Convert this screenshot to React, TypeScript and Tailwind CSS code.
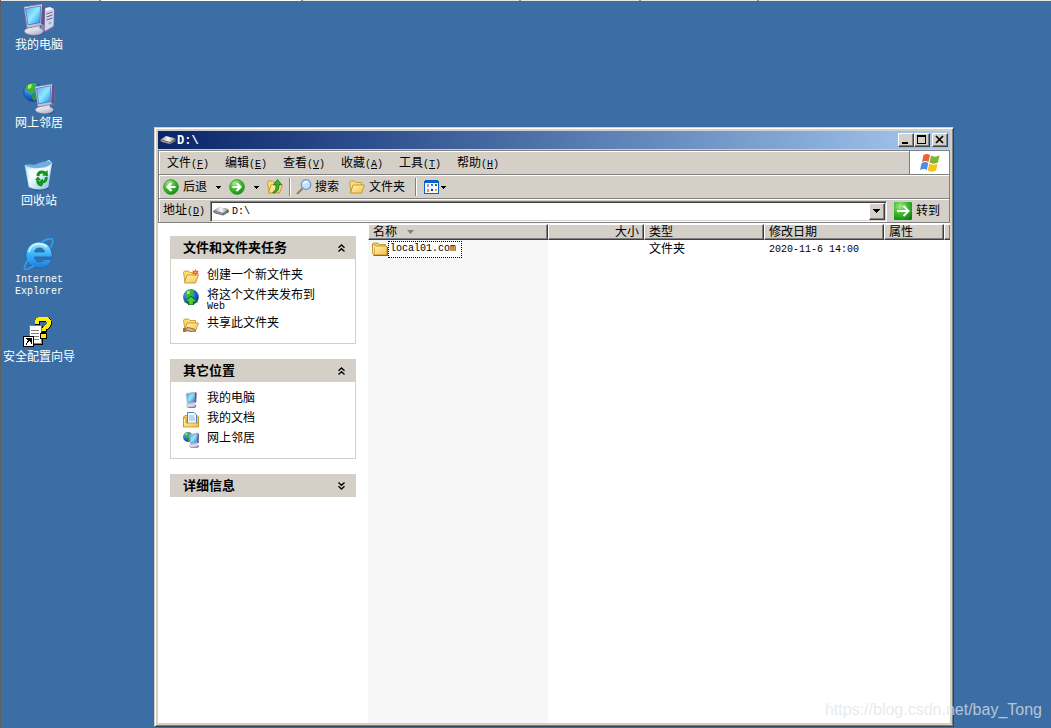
import { useState } from 'react';
import type { ReactNode } from 'react';
import clsx from 'clsx';

const RAISED =
  'border border-t-white border-l-white border-r-[#404040] border-b-[#404040] bg-[#d4d0c8] shadow-[inset_-1px_-1px_0_#808080]';

/* ---------- shared drawing bits ---------- */

function Gradients() {
  return (
    <svg className="absolute h-0 w-0" aria-hidden="true">
      <defs>
        <linearGradient id="screen" x1="0" y1="0" x2="1" y2="1">
          <stop offset="0" stopColor="#5f9cf0" />
          <stop offset="0.5" stopColor="#8cecff" />
          <stop offset="1" stopColor="#1f86f0" />
        </linearGradient>
        <linearGradient id="plastic" x1="0" y1="0" x2="1" y2="1">
          <stop offset="0" stopColor="#fbfaff" />
          <stop offset="1" stopColor="#a9a6c4" />
        </linearGradient>
        <radialGradient id="globe" cx="0.35" cy="0.3" r="0.8">
          <stop offset="0" stopColor="#7cc4ff" />
          <stop offset="0.5" stopColor="#1f6cdc" />
          <stop offset="1" stopColor="#082e80" />
        </radialGradient>
        <radialGradient id="green" cx="0.35" cy="0.25" r="0.85">
          <stop offset="0" stopColor="#a6e88a" />
          <stop offset="0.5" stopColor="#3fb92f" />
          <stop offset="1" stopColor="#0f8213" />
        </radialGradient>
        <linearGradient id="folder" x1="0" y1="0" x2="1" y2="1">
          <stop offset="0" stopColor="#fff8c4" />
          <stop offset="1" stopColor="#f5c040" />
        </linearGradient>
        <linearGradient id="bin" x1="0" y1="0" x2="1" y2="1">
          <stop offset="0" stopColor="#a8dcf8" />
          <stop offset="0.45" stopColor="#f2fbff" />
          <stop offset="1" stopColor="#7db9e6" />
        </linearGradient>
        <linearGradient id="ie" x1="0" y1="0" x2="0" y2="1">
          <stop offset="0" stopColor="#a4ecff" />
          <stop offset="0.5" stopColor="#36b0f8" />
          <stop offset="1" stopColor="#1c7ee0" />
        </linearGradient>
        <linearGradient id="drive" x1="0" y1="0" x2="1" y2="0">
          <stop offset="0" stopColor="#8c8c90" />
          <stop offset="0.5" stopColor="#f8f8fa" />
          <stop offset="1" stopColor="#8e8e94" />
        </linearGradient>
      </defs>
    </svg>
  );
}

function Monitor() {
  return (
    <g>
      <ellipse cx="12" cy="28" rx="9.5" ry="4" fill="#4a4580" />
      <ellipse cx="11" cy="27.2" rx="9.5" ry="4" fill="url(#plastic)" stroke="#8783a8" strokeWidth="0.6" />
      <path d="M9 21 L17 20 L16 27 L9 27 Z" fill="#dddcea" />
      <path d="M1 3 L19 0 L22 2 L21 21 L4 24 Z" fill="url(#plastic)" stroke="#77739c" strokeWidth="0.7" />
      <path d="M19 0 L22 2 L21 21 L18 20 Z" fill="#5a568c" />
      <path d="M2.5 4.5 L17.5 2 L17 18.5 L5 21 Z" fill="url(#screen)" stroke="#2f50a8" strokeWidth="0.6" />
    </g>
  );
}

function Globe() {
  return (
    <g>
      <circle cx="10" cy="10" r="9.5" fill="url(#globe)" stroke="#174a8f" strokeWidth="0.6" />
      <path d="M2 6 C5 1 10 0 14 1.5 L12 5 L14 8 L10 10 L9 13 L5 10 Z" fill="#3bb33a" />
      <path d="M10 12 L15 12 L15 16 L11 19 L9 16 Z" fill="#2c9c30" />
      <path d="M5 3 L9 2 L8 6 L5 7 Z" fill="#b9e86a" />
    </g>
  );
}

interface IconProps {
  className?: string;
}

function ComputerIcon({ className = 'h-8 w-8' }: IconProps) {
  return (
    <svg className={className} viewBox="0 0 32 32" aria-hidden="true">
      <path d="M19 5 L27 3 L32 6 L31 24 L23 28 L19 25 Z" fill="#6e6aa0" />
      <path d="M18 5 L27 3 L31 5 L22 8 Z" fill="#f2f1fa" />
      <path d="M18 5 L22 8 L22 27 L18 24 Z" fill="#8b87b4" />
      <path d="M22 8 L31 5 L30.5 22 L22 27 Z" fill="#d8d6e8" />
      <path d="M23.5 10 L29.5 8 M23.5 13 L29.5 11 M23.5 16 L29.5 14" stroke="#5d598c" strokeWidth="1" />
      <circle cx="27" cy="19" r="1.5" fill="#52c8e8" />
      <Monitor />
    </svg>
  );
}

function SmallComputerIcon({ className = 'h-4 w-4' }: IconProps) {
  return (
    <svg className={className} viewBox="-5 0 32 32" aria-hidden="true">
      <Monitor />
    </svg>
  );
}

function NetworkIcon({ className = 'h-8 w-8' }: IconProps) {
  return (
    <svg className={className} viewBox="0 0 32 32" aria-hidden="true">
      <Globe />
      <g transform="translate(11 2) scale(0.95)">
        <Monitor />
      </g>
    </svg>
  );
}

function RecycleIcon() {
  return (
    <svg className="h-8 w-8" viewBox="0 0 32 32" aria-hidden="true">
      <path d="M6 28 L14 31 L25 29 L30 4 L27 5 Z" fill="#1d4474" opacity="0.7" />
      <path d="M2 5 L9 7 L18 5 L26 0 L29 3 L25 27 C20 30 12 30 6 27 Z" fill="url(#bin)" stroke="#b8dcf4" strokeWidth="0.6" />
      <path d="M2 5 C7 3 10 6 14 4 C19 1 22 2 26 1 L29 3 C24 9 9 10 2 5 Z" fill="#6faee0" />
      <path d="M4 8 C10 11 22 10 27 6 L26 14 L7 18 Z" fill="#ffffff" opacity="0.6" />
      <g fill="none" stroke="#12941a" strokeWidth="3">
        <path d="M15 16 C15 12 19 11 22 13" />
        <path d="M23 17 C24 20 22 22 19 22" />
        <path d="M15 20 C14 23 16 25 19 25" />
      </g>
      <path d="M19 15.5 L25 16 L24.5 10 Z" fill="#12941a" />
      <path d="M20 18.5 L15.5 22 L20 25.5 Z" fill="#12941a" />
      <path d="M12 20 L18 20 L15 16.5 Z" fill="#12941a" />
    </svg>
  );
}

function ExplorerIcon() {
  return (
    <svg className="h-8 w-8" viewBox="0 0 32 32" aria-hidden="true">
      <path
        d="M29 19 H11.5 C12 22.5 14 24 17 24 C19 24 20.5 23 21.5 21.5 H28.5 C27 27 22.500 30 16.500 30 C8.500 30 3 24.500 3 17 C3 9.500 8.500 4 16 4 C24 4 29.500 9.500 29 19 Z M11.500 14 H21.500 C21 11.500 19.500 10 16.500 10 C13.500 10 12 11.500 11.500 14 Z"
        fill="url(#ie)"
        fillRule="evenodd"
        stroke="#1263b0"
        strokeWidth="0.7"
      />
      <path
        d="M5 22 C1 28 0 33 4 31.500 C6.500 30.500 9 29 11 27.500 M18 4.500 C24 0.500 30 -1 29.800 3 C29.700 5.500 28.500 8 27.500 9.500"
        fill="none"
        stroke="#2f9fe6"
        strokeWidth="1.800"
      />
      <path d="M6 14 C7 9 11 6 16 6 C20 6 22 7 24 9" fill="none" stroke="#d4f6ff" strokeWidth="1.600" />
    </svg>
  );
}

function WizardIcon() {
  return (
    <svg className="h-8 w-8" viewBox="0 0 32 32" shapeRendering="crispEdges" aria-hidden="true">
      <path d="M7 10 H20 V29 H7 Z" fill="#000" />
      <path d="M6 9 H18 V27 H6 Z" fill="#fff" stroke="#808080" />
      <path d="M8 14 H16 M8 17 H16 M8 20 H16 M8 23 H16" stroke="#808080" />
      <path d="M14 8 V6 C14 3 17 2.500 20 2.500 C24 2.500 26 4 26 7 C26 11 20.500 11 20.500 16" fill="none" stroke="#000" strokeWidth="5" transform="translate(0.500 0.500)" />
      <path d="M14 8 V6 C14 3 17 2.500 20 2.500 C24 2.500 26 4 26 7 C26 11 20.500 11 20.500 15" fill="none" stroke="#ffee00" strokeWidth="4" />
      <path d="M17 17 H24 V23 H17 Z" fill="#000" />
      <path d="M18 18 H23 V22 H18 Z" fill="#ffee00" />
      <path d="M0 20 H11 V31 H0 Z" fill="#000" />
      <path d="M1 21 H10 V30 H1 Z" fill="#fff" />
      <path d="M3 22 H9 V28 H8 V26 H7 V25 H6 V26 H5 V27 H4 V29 H3 V27 H4 V25 H5 V24 H4 V23 H3 Z" fill="#000" />
    </svg>
  );
}

function DriveIcon() {
  return (
    <svg className="h-4 w-4 shrink-0" viewBox="0 0 16 16" aria-hidden="true">
      <path d="M0 8 L6 4.5 L15 6 L16 9 L10 12.5 L1 10 Z" fill="#4c4c52" />
      <path d="M0.5 7.5 L6 4 L15.5 6.5 L10 10 Z" fill="url(#drive)" />
      <path d="M0.5 8 L10 10.5 L10 12 L1 9.5 Z" fill="#9a9aa0" />
      <path d="M10 10.300 L15.500 7 L15.500 9 L10 12 Z" fill="#707076" />
      <circle cx="12" cy="10" r="0.800" fill="#5ab84a" />
    </svg>
  );
}

function ArrowDisc({ back }: { back?: boolean }) {
  return (
    <svg className="h-4 w-4 shrink-0" viewBox="0 0 16 16" aria-hidden="true">
      <circle cx="8" cy="8" r="7.4" fill="url(#green)" stroke="#2c9a2a" strokeWidth="0.8" />
      <path
        d={back ? 'M12.5 8 H4.5 M8.5 4 L4.5 8 L8.5 12' : 'M3.5 8 H11.5 M7.5 4 L11.5 8 L7.5 12'}
        fill="none"
        stroke="#fff"
        strokeWidth="2.2"
      />
    </svg>
  );
}

function OpenFolder({ children }: { children?: ReactNode }) {
  return (
    <svg className="h-4 w-4 shrink-0" viewBox="0 0 16 16" aria-hidden="true">
      <path d="M0.5 3.5 L1.5 2 H5.5 L7 3.5 H12.5 V7 H4 L2 13 Z" fill="#f9dc74" stroke="#c48f1c" strokeWidth="0.8" />
      <path d="M4 6 H15.500 L12.500 14 H1.500 Z" fill="url(#folder)" stroke="#c08a1a" strokeWidth="0.8" />
      {children}
    </svg>
  );
}

function NewFolderIcon() {
  return (
    <OpenFolder>
      <path d="M12.5 0 L13.5 2 L16 1.5 L14.5 3.5 L16 5.5 L13.5 5 L12.5 7 L11.5 5 L9 5.5 L10.5 3.5 L9 1.5 L11.5 2 Z" fill="#f0582a" />
      <circle cx="12.5" cy="3.5" r="1" fill="#ffb04c" />
    </OpenFolder>
  );
}

function ShareFolderIcon() {
  return (
    <OpenFolder>
      <path d="M1 12 L5 10.5 L11 12 L13 14 L7 14.5 Z" fill="#e8b088" stroke="#6e4a34" strokeWidth="0.7" />
      <path d="M0 11 H3 V15 H0 Z" fill="#a07830" />
    </OpenFolder>
  );
}

function UpFolderIcon() {
  return (
    <OpenFolder>
      <path d="M6 13 C8.500 12 9 10 9 5.5 H6.5 L10.5 0.5 L14.5 5.5 H12 C12 10.500 10.500 13.500 6 14 Z" fill="#36b32e" stroke="#14741a" strokeWidth="0.8" />
    </OpenFolder>
  );
}

function PublishIcon() {
  return (
    <svg className="h-4 w-4" viewBox="0 0 20 20" aria-hidden="true">
      <Globe />
      <path d="M10 9 L18 16 H13 V20 H7 V16 H2 Z" fill="#45d03c" stroke="#0d5f14" strokeWidth="1.2" />
    </svg>
  );
}

function DocumentsIcon() {
  return (
    <svg className="h-4 w-4" viewBox="0 0 16 16" aria-hidden="true">
      <path d="M0.5 5 L2 3.5 H14 L15.5 5 V14 H0.5 Z" fill="#f3c950" stroke="#b98618" strokeWidth="0.8" />
      <path d="M4.5 0.5 H11 L13.5 3 V12 H4.5 Z" fill="#f2f8ff" stroke="#3a7ac8" strokeWidth="0.9" />
      <path d="M6 4 H11 M6 6 H12 M6 8 H12" stroke="#6ea4dc" strokeWidth="0.8" />
      <path d="M0.5 6 H3 V11 H15.5 V15 H0.5 Z" fill="url(#folder)" stroke="#b98618" strokeWidth="0.7" />
    </svg>
  );
}

function ClosedFolderIcon() {
  return (
    <svg className="h-4 w-4 shrink-0" viewBox="0 0 16 16" aria-hidden="true">
      <path d="M1.500 14.500 H15.500 V6" fill="none" stroke="#6b5a2a" strokeWidth="1" />
      <path d="M0.500 3 L1.500 2 H6 L7.500 3.500 H13.500 V7 H0.500 Z" fill="#f5d25c" stroke="#b8871c" strokeWidth="0.8" />
      <path d="M0.500 4 V12.500 L2 14 H15 V6 L14 5 H4 L2.500 4 Z" fill="url(#folder)" stroke="#b8871c" strokeWidth="0.8" />
      <path d="M2.500 13.500 V6" stroke="#d89c24" strokeWidth="0.8" />
    </svg>
  );
}

function SearchIcon() {
  return (
    <svg className="h-4 w-4 shrink-0" viewBox="0 0 16 16" aria-hidden="true">
      <path d="M1 15 L6.5 9.5" stroke="#b07848" strokeWidth="2.2" />
      <circle cx="10" cy="5.5" r="4.8" fill="#bfe4fb" stroke="#6f93d0" strokeWidth="1.2" />
      <path d="M7.5 5 C8 3 10 2.5 11.5 3" fill="none" stroke="#fff" strokeWidth="1.4" />
    </svg>
  );
}

function ViewsIcon() {
  return (
    <svg className="h-4 w-4" viewBox="0 0 16 16" shapeRendering="crispEdges" aria-hidden="true">
      <path d="M1 1 H14 V2 H15 V15 H0 V2 H1 Z" fill="#0a5fd0" />
      <path d="M1 4 H14 V14 H1 Z" fill="#f4f8ff" />
      <path d="M3 5 H5 V8 H3 Z" fill="#9c9cd0" />
      <path d="M7 5 H9 V7 H7 Z" fill="#2a78e8" />
      <path d="M11 5 H13 V7 H11 Z" fill="#189018" />
      <path d="M3 10 H5 V13 H3 Z" fill="#f08060" />
      <path d="M7 10 H9 V12 H7 Z" fill="#102c90" />
      <path d="M11 10 H13 V12 H11 Z" fill="#e0a010" />
    </svg>
  );
}

function WindowsFlag() {
  return (
    <svg className="h-5 w-5" viewBox="0 0 20 20" aria-hidden="true">
      <path d="M3.5 2 C6 0.5 8 0.8 10 2 L8.5 9 C6.5 7.8 4.5 7.8 2 9 Z" fill="#ee6130" />
      <path d="M11 2.5 C13.5 4 16 4 19.5 2.5 L18 9.5 C15 11 12.5 11 9.5 9.5 Z" fill="#7cb53a" />
      <path d="M1.7 10 C4.5 8.7 6.5 8.9 8.3 10 L6.8 17 C5 15.8 3 15.5 0 17 Z" fill="#4c8fe0" />
      <path d="M9.2 10.7 C12 12 14.5 12.2 17.7 10.7 L16 17.5 C13 19 10.5 19 7.7 17.5 Z" fill="#f7c11c" />
    </svg>
  );
}

function Triangle() {
  return (
    <svg className="h-[3px] w-[5px] shrink-0" viewBox="0 0 5 3" shapeRendering="crispEdges" aria-hidden="true">
      <path d="M0 0 H5 V1 H4 V2 H3 V3 H2 V2 H1 V1 H0 Z" />
    </svg>
  );
}

function Chevrons({ down }: { down?: boolean }) {
  return (
    <svg className={clsx('h-2 w-[7px]', down && 'rotate-180')} viewBox="0 0 7 8" aria-hidden="true">
      <path d="M0.5 3.7 L3.5 0.9 L6.5 3.7 M0.5 7.5 L3.5 4.7 L6.5 7.5" fill="none" stroke="#000" strokeWidth="1.3" />
    </svg>
  );
}

// half-width characters take 6px, half of a 12px ideograph
function Latin({ children, className }: { children: ReactNode; className?: string }) {
  return <span className={clsx("font-['Liberation_Mono',monospace] text-[10px]", className)}>{children}</span>;
}

/* ---------- desktop ---------- */

const shortcuts = [
  { label: '我的电脑', icon: <ComputerIcon /> },
  { label: '网上邻居', icon: <NetworkIcon /> },
  { label: '回收站', icon: <RecycleIcon /> },
  { label: 'Internet Explorer', icon: <ExplorerIcon />, latin: true },
  { label: '安全配置向导', icon: <WizardIcon /> },
];

function Shortcuts() {
  return (
    <ul className="w-[76px] pt-[3px]">
      {shortcuts.map(({ label, icon, latin }) => (
        <li key={label} className="h-[78px]">
          <button type="button" className="flex w-full flex-col items-center gap-[3px] text-center leading-3 text-white">
            {icon}
            {latin ? <Latin className="w-16 pt-px">{label}</Latin> : <span className="whitespace-nowrap">{label}</span>}
          </button>
        </li>
      ))}
    </ul>
  );
}

/* ---------- window chrome ---------- */

function TitleBar() {
  return (
    <header className="flex h-[18px] items-center bg-linear-to-r from-[#0a246a] to-[#a6caf0] px-[2px]">
      <DriveIcon />
      <h1 className="ml-px flex-1 leading-4 text-white">
        <span className="font-['Liberation_Mono',monospace] font-bold">D:\</span>
      </h1>
      <button type="button" aria-label="最小化" className={clsx(RAISED, 'h-[14px] w-4')}>
        <svg viewBox="0 0 14 12" className="h-3 w-[14px]" shapeRendering="crispEdges">
          <path d="M3 8 H9 V10 H3 Z" />
        </svg>
      </button>
      <button type="button" aria-label="最大化" className={clsx(RAISED, 'h-[14px] w-4')}>
        <svg viewBox="0 0 14 12" className="h-3 w-[14px]" shapeRendering="crispEdges">
          <path d="M2 1 H11 V10 H2 Z M3 3 V9 H10 V3 Z" fillRule="evenodd" />
        </svg>
      </button>
      <button type="button" aria-label="关闭" className={clsx(RAISED, 'ml-[2px] h-[14px] w-4')}>
        <svg viewBox="0 0 14 12" className="h-3 w-[14px]">
          <path d="M3 2 L10 9 M10 2 L3 9" stroke="#000" strokeWidth="1.7" />
        </svg>
      </button>
    </header>
  );
}

const menus = [
  ['文件', 'F'],
  ['编辑', 'E'],
  ['查看', 'V'],
  ['收藏', 'A'],
  ['工具', 'T'],
  ['帮助', 'H'],
];

function MenuBar() {
  return (
    <div className="flex h-6 border-b border-[#808080]">
      <nav className="flex flex-1 items-center pt-[2px] pl-2">
        {menus.map(([label, key]) => (
          <button key={key} type="button" className="w-[58px] text-left leading-4">
            {label}
            <Latin>
              (<u>{key}</u>)
            </Latin>
          </button>
        ))}
      </nav>
      <div className="flex w-10 items-center justify-center border-l border-[#808080] bg-white">
        <WindowsFlag />
      </div>
    </div>
  );
}

function Separator() {
  return <span className="h-[18px] w-[2px] border-l border-[#808080] bg-white" />;
}

function ToolBar() {
  return (
    <div className="flex h-6 items-center border-t border-b border-t-white border-b-[#808080] pl-1 leading-4">
      <button type="button" className="flex items-center gap-1">
        <ArrowDisc back />
        后退
      </button>
      <button type="button" aria-label="后退历史" className="flex h-4 w-[22px] items-center justify-center">
        <Triangle />
      </button>
      <button type="button" aria-label="前进">
        <ArrowDisc />
      </button>
      <button type="button" aria-label="前进历史" className="flex h-4 w-[22px] items-center justify-center">
        <Triangle />
      </button>
      <button type="button" aria-label="向上" className="mr-[6px]">
        <UpFolderIcon />
      </button>
      <Separator />
      <button type="button" className="ml-[5px] flex items-center gap-[3px]">
        <SearchIcon />
        搜索
      </button>
      <button type="button" className="mr-[10px] ml-[10px] flex items-center gap-1">
        <OpenFolder />
        文件夹
      </button>
      <Separator />
      <button type="button" aria-label="查看" className="ml-[7px] flex items-center gap-px">
        <ViewsIcon />
        <Triangle />
      </button>
    </div>
  );
}

function AddressBar() {
  const [path, setPath] = useState('D:\\');

  return (
    <form
      className="flex h-6 items-center border-t border-b border-t-white border-b-[#808080] pl-1 leading-4"
      onSubmit={(e) => e.preventDefault()}
    >
      <label htmlFor="address" className="w-[47px] whitespace-nowrap">
        地址
        <Latin>
          (<u>D</u>)
        </Latin>
      </label>
      <div className="flex h-[21px] min-w-0 flex-1 items-center border border-t-[#808080] border-r-white border-b-white border-l-[#808080] bg-white pl-[2px] shadow-[inset_1px_1px_0_#404040,inset_-1px_-1px_0_#d4d0c8]">
        <DriveIcon />
        <input
          id="address"
          className="ml-[3px] min-w-0 flex-1 bg-transparent pt-[2px] font-['Liberation_Mono',monospace] text-[10px] leading-4 outline-none"
          value={path}
          onChange={(e) => setPath(e.target.value)}
        />
        <button type="button" aria-label="显示地址列表" className={clsx(RAISED, 'mr-px flex h-[17px] w-4 items-center justify-center')}>
          <svg className="h-1 w-[7px]" viewBox="0 0 7 4" shapeRendering="crispEdges">
            <path d="M0 0 H7 V1 H6 V2 H5 V3 H4 V4 H3 V3 H2 V2 H1 V1 H0 Z" />
          </svg>
        </button>
      </div>
      <button type="submit" className="mr-[9px] ml-[7px] flex items-center gap-1">
        <svg className="h-[18px] w-[18px]" viewBox="0 0 18 18" aria-hidden="true">
          <rect x="0" y="0" width="18" height="18" rx="1" fill="url(#green)" />
          <path d="M3 9 H14 M9.5 4 L14.5 9 L9.5 14" fill="none" stroke="#fff" strokeWidth="2" />
        </svg>
        转到
      </button>
    </form>
  );
}

/* ---------- task pane ---------- */

interface Task {
  label: string;
  suffix?: string;
  icon: ReactNode;
}

const folderTasks: Task[] = [
  { label: '创建一个新文件夹', icon: <NewFolderIcon /> },
  { label: '将这个文件夹发布到', suffix: 'Web', icon: <PublishIcon /> },
  { label: '共享此文件夹', icon: <ShareFolderIcon /> },
];

const otherPlaces: Task[] = [
  { label: '我的电脑', icon: <SmallComputerIcon /> },
  { label: '我的文档', icon: <DocumentsIcon /> },
  { label: '网上邻居', icon: <NetworkIcon className="h-4 w-4" /> },
];

function TaskGroup({ title, tasks }: { title: string; tasks?: Task[] }) {
  return (
    <section>
      <h2>
        <button
          type="button"
          aria-expanded={Boolean(tasks)}
          className="flex h-[23px] w-full items-center justify-between bg-[#d4d0c8] pr-[11px] pl-[13px] text-[13px] leading-4 font-bold"
        >
          {title}
          <Chevrons down={!tasks} />
        </button>
      </h2>
      {tasks && (
        <ul className="border border-t-0 border-[#d4d0c8] px-3 pt-[10px] pb-[6px]">
          {tasks.map(({ label, suffix, icon }) => (
            <li key={label} className={suffix ? 'h-7' : 'h-5'}>
              <a href="#" className="flex gap-2 leading-3">
                <span>{icon}</span>
                <span>
                  {label}
                  {suffix && <Latin className="block">{suffix}</Latin>}
                </span>
              </a>
            </li>
          ))}
        </ul>
      )}
    </section>
  );
}

/* ---------- file list ---------- */

const columns = [
  { label: '名称', width: 'w-[180px]', sorted: true },
  { label: '大小', width: 'w-24', right: true },
  { label: '类型', width: 'w-[120px]' },
  { label: '修改日期', width: 'w-[120px]' },
  { label: '属性', width: 'w-[60px]' },
];

const files = [{ name: 'local01.com', size: '', type: '文件夹', modified: '2020-11-6 14:00', attributes: '' }];

function FileList() {
  return (
    <div className="min-w-0 flex-1 overflow-hidden bg-[linear-gradient(to_right,#f7f7f7_180px,#fff_180px)] pt-px">
      <table className="w-full table-fixed border-separate border-spacing-0">
        <thead>
          <tr>
            {columns.map(({ label, width, right, sorted }) => (
              <th key={label} scope="col" className={clsx(RAISED, width, 'h-4 p-0 px-1 leading-[14px] font-normal', right ? 'text-right' : 'text-left')}>
                <span className={clsx('flex items-center gap-[10px]', right && 'justify-end')}>
                  {label}
                  {sorted && (
                    <svg className="h-1 w-[7px]" viewBox="0 0 7 4" aria-hidden="true">
                      <path d="M0 0 H7 L3.5 4 Z" fill="#808080" />
                    </svg>
                  )}
                </span>
              </th>
            ))}
            <th className={clsx(RAISED, 'border-r-0 p-0')} />
          </tr>
        </thead>
        <tbody>
          {files.map((file) => (
            <tr key={file.name} className="h-[17px] leading-4 whitespace-nowrap">
              <td className="p-0 pl-1">
                <div className="flex items-center">
                  <ClosedFolderIcon />
                  <span className="flex h-[17px] items-center border border-dotted border-black bg-white pr-[5px] pl-px">
                    <Latin>{file.name}</Latin>
                  </span>
                </div>
              </td>
              <td className="p-0 px-[5px] text-right">{file.size}</td>
              <td className="p-0 px-[5px]">{file.type}</td>
              <td className="p-0 px-[5px]">
                <Latin>{file.modified}</Latin>
              </td>
              <td className="p-0 px-[5px]">{file.attributes}</td>
              <td className="p-0" />
            </tr>
          ))}
        </tbody>
      </table>
    </div>
  );
}

function ExplorerWindow() {
  return (
    <main className="absolute top-[127px] right-[97px] bottom-px left-[153px] flex flex-col border border-t-[#d4d0c8] border-r-[#404040] border-b-[#404040] border-l-[#d4d0c8] bg-[#d4d0c8] p-[3px] shadow-[inset_1px_1px_0_#fff,inset_-1px_-1px_0_#808080]">
      <TitleBar />
      <div className="mt-px border border-t-[#808080] border-r-[#808080] border-b-0 border-l-[#808080] shadow-[inset_1px_1px_0_#fff]">
        <MenuBar />
        <ToolBar />
        <AddressBar />
      </div>
      <div className="flex min-h-0 flex-1 bg-white">
        <aside className="flex w-[210px] shrink-0 flex-col gap-[15px] px-3 pt-[13px]">
          <TaskGroup title="文件和文件夹任务" tasks={folderTasks} />
          <TaskGroup title="其它位置" tasks={otherPlaces} />
          <TaskGroup title="详细信息" />
        </aside>
        <FileList />
      </div>
    </main>
  );
}

export default function App() {
  return (
    <div className="relative min-h-screen overflow-hidden border-l border-[#606060] bg-[#3a6ea5] font-['Liberation_Sans','Noto_Sans_CJK_SC',sans-serif] text-xs text-black">
      <Gradients />
      <div className="flex h-px gap-[2px] bg-[#8a8f8a]">
        <span className="w-[98px] bg-[#e4e8e0]" />
        <span className="w-[200px] bg-white" />
        <span className="w-[216px] bg-[#e4e8e0]" />
        <span className="w-[118px] bg-[#e4e8e0]" />
        <span className="w-[116px] bg-[#e4e8e0]" />
        <span className="flex-1 bg-[#e4e8e0]" />
      </div>
      <Shortcuts />
      <ExplorerWindow />
      <p className="absolute right-[9px] bottom-2 text-base leading-5 text-[#e0e3e8]/75">https://blog.csdn.net/bay_Tong</p>
    </div>
  );
}
